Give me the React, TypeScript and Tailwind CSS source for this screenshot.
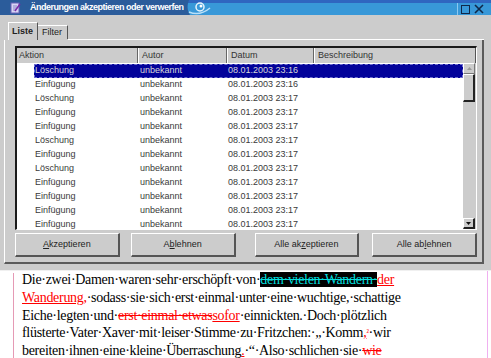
import React from "react";

const rows: [string, string][] = [
  ["Löschung", "23:16"],
  ["Einfügung", "23:16"],
  ["Löschung", "23:17"],
  ["Einfügung", "23:17"],
  ["Einfügung", "23:17"],
  ["Löschung", "23:17"],
  ["Einfügung", "23:17"],
  ["Löschung", "23:17"],
  ["Einfügung", "23:17"],
  ["Einfügung", "23:17"],
  ["Einfügung", "23:17"],
  ["Einfügung", "23:17"],
];

const TitleBar = () => (
  <div className="h-[15px] flex text-white">
    <div className="w-[184px] shrink-0 bg-[#2b5c9b] flex items-center">
      <svg width="11" height="12" viewBox="0 0 11 12" className="ml-[10px] shrink-0">
        <rect x="1" y="1" width="8" height="10" fill="#d8d4f4" stroke="#6a62b8" />
        <path d="M3 4h4M3 6h4M3 8h3" stroke="#8a86c8" />
        <path d="M5 9l5-7" stroke="#7a2aa8" strokeWidth="1.5" />
      </svg>
      <span className="ml-[9px] text-[9px] font-bold tracking-[-0.5px] leading-none whitespace-nowrap">
        Änderungen akzeptieren oder verwerfen
      </span>
    </div>
    <svg width="40" height="15" viewBox="0 0 40 15" className="shrink-0">
      <rect width="40" height="15" fill="#3898d8" />
      <rect width="40" height="3" fill="#2f66c0" />
      <path d="M0 0H5C3 5 3 10 6 15H0Z" fill="#2b5c9b" />
      <path d="M5 12C12 15 20 13 26 8" stroke="#b9e0f8" strokeWidth="1.5" fill="none" />
      <circle cx="16" cy="7" r="4" fill="none" stroke="#e8f4fc" strokeWidth="1.5" />
      <circle cx="17" cy="6" r="1.5" fill="#ffffff" />
    </svg>
    <div className="flex-1 flex bg-[#3898d8] border-t-[3px] border-[#2f66c0]">
      <div className="flex-1" />
      <div className="w-[34px] flex items-center border-l border-[#8cc8f0] pl-[3px] gap-[4px]">
        <div className="w-[9px] h-[9px] border-[1.5px] border-[#102848]" />
        <svg width="10" height="10" viewBox="0 0 10 10">
          <path d="M1 1L9 9M9 1L1 9" stroke="#102848" strokeWidth="1.6" />
        </svg>
      </div>
    </div>
  </div>
);

const Tabs = () => (
  <div className="h-[25px] flex items-end pl-[4px] text-[9px] text-[#222]">
    <div className="h-[18px] w-[30px] border-t border-l border-white border-r border-r-[#555] flex items-center pl-[3px] font-bold">
      Liste
    </div>
    <div className="h-[14px] w-[30px] border-t border-white border-r border-r-[#555] flex items-center pl-[4px] mb-[1px]">
      Filter
    </div>
    <div className="flex-1 border-b border-white" />
  </div>
);

const Btn = ({ pre, u, post, className }: { pre: string; u: string; post: string; className?: string }) => (
  <div
    className={`w-[105px] h-[24px] flex items-center justify-center text-[9px] text-[#222] bg-[#cccccc] border-t border-l border-white border-r-2 border-b-2 border-r-[#555] border-b-[#555] ${className ?? ""}`}
  >
    {pre}
    <span className="underline">{u}</span>
    {post}
  </div>
);

const Scrollbar = () => (
  <div className="w-[13px] flex flex-col bg-[#cccccc] pr-[1px]">
    <div className="h-[11px] border-t border-l border-white border-r border-b border-r-[#777] border-b-[#777] flex items-center justify-center">
      <svg width="5" height="3" viewBox="0 0 5 3">
        <path d="M0 3L2.5 0L5 3Z" fill="#999" />
      </svg>
    </div>
    <div className="h-[28px] border-t border-l border-white border-r-2 border-b-2 border-r-[#222] border-b-[#222]" />
    <div className="flex-1" />
    <div className="h-[11px] border-t border-l border-white border-r-2 border-b-2 border-r-[#222] border-b-[#222] flex items-center justify-center">
      <svg width="5" height="3" viewBox="0 0 5 3">
        <path d="M0 0L2.5 3L5 0Z" fill="#111" />
      </svg>
    </div>
  </div>
);

const ListView = () => (
  <div className="h-[184px] flex flex-col border-t-2 border-l-2 border-[#1a1a1a] border-r border-b border-r-white border-b-white text-[9px]">
    <div className="h-[15px] flex bg-[#cccccc] text-[#333] items-center">
      <div className="w-[121px] h-full flex items-center pl-[2px] border-r border-[#666]">Aktion</div>
      <div className="w-[89px] h-full flex items-center pl-[3px] border-r border-[#666] border-l border-l-white">Autor</div>
      <div className="w-[87px] h-full flex items-center pl-[3px] border-r border-[#666] border-l border-l-white">Datum</div>
      <div className="flex-1 h-full flex items-center pl-[3px] border-l border-l-white border-r border-r-[#555]">Beschreibung</div>
    </div>
    <div className="flex-1 flex min-h-0">
      <div className="flex-1 bg-white overflow-hidden pt-[1px]">
        {rows.map(([a, t], i) => (
          <div
            key={i}
            className={`ml-[17px] h-[14px] flex items-center ${
              i === 0 ? "bg-[#02029a] text-[#d8d8d8] outline-1 outline-dashed outline-[#7070d0] -outline-offset-1" : "text-[#3a3a3a]"
            }`}
          >
            <div className="w-[104px] pl-[1px]">{a}</div>
            <div className="w-[89px] pl-[2px]">unbekannt</div>
            <div className="w-[87px] pl-[1px]">08.01.2003 {t}</div>
            <div className="flex-1" />
          </div>
        ))}
      </div>
      <Scrollbar />
    </div>
  </div>
);

const Dialog = () => (
  <div className="h-[271px] bg-[#cccccc] flex flex-col border-b border-[#f0f0f0]">
    <TitleBar />
    <div className="flex flex-col pl-[4px] pr-[7px]">
      <Tabs />
      <div className="h-[224px] flex flex-col border-l border-white border-r-2 border-b-2 border-r-[#5a5a5a] border-b-[#5a5a5a] pl-[10px] pr-[5px] pt-[6px]">
        <ListView />
        <div className="flex mt-[3px]">
          <Btn pre="" u="A" post="kzeptieren" />
          <Btn pre="A" u="b" post="lehnen" className="ml-[11px]" />
          <Btn pre="Alle ak" u="z" post="eptieren" className="ml-[19px]" />
          <Btn pre="Alle ab" u="l" post="ehnen" className="ml-[13px]" />
        </div>
      </div>
    </div>
  </div>
);

const Doc = () => (
  <div className="flex h-[87px]">
    <div className="w-[14px] border-r border-[#e59ab5] mt-[2px]" />
    <div className="flex-1 pl-[8px] text-[14px] tracking-[-0.3px] leading-[17.8px] text-black whitespace-nowrap font-['Liberation_Serif','Times_New_Roman',serif]">
      <div>
        Die·zwei·Damen·waren·sehr·erschöpft·von·
        <span className="bg-black text-[#00dede] line-through">dem·vielen·Wandern·</span>
        <span className="text-[#ff0000] underline">der</span>
      </div>
      <div>
        <span className="text-[#ff0000] underline">Wanderung,</span>·sodass·sie·sich·erst·einmal·unter·eine·wuchtige,·schattige
      </div>
      <div>
        Eiche·legten·und·<span className="text-[#ff0000] line-through">erst·einmal·etwas</span>
        <span className="text-[#ff0000] underline">sofor</span>·einnickten.·Doch·plötzlich
      </div>
      <div>
        flüsterte·Vater·Xaver·mit·leiser·Stimme·zu·Fritzchen:·„·Komm
        <span className="text-[#ff0000] underline">,</span>
        <span className="text-[#ff0000] text-[8px] align-top">²</span>·wir
      </div>
      <div>
        bereiten·ihnen·eine·kleine·Überraschung<span className="text-[#ff0000] underline">.</span>·“·Also·schlichen·sie·
        <span className="text-[#ff0000] line-through">wie</span>
      </div>
    </div>
    <div className="w-[4px] border-l border-[#f0b0f0]" />
  </div>
);

export default function App() {
  return (
    <div className="w-[491px] h-[358px] overflow-hidden bg-white font-['Liberation_Sans',Arial,sans-serif]">
      <Dialog />
      <Doc />
    </div>
  );
}
